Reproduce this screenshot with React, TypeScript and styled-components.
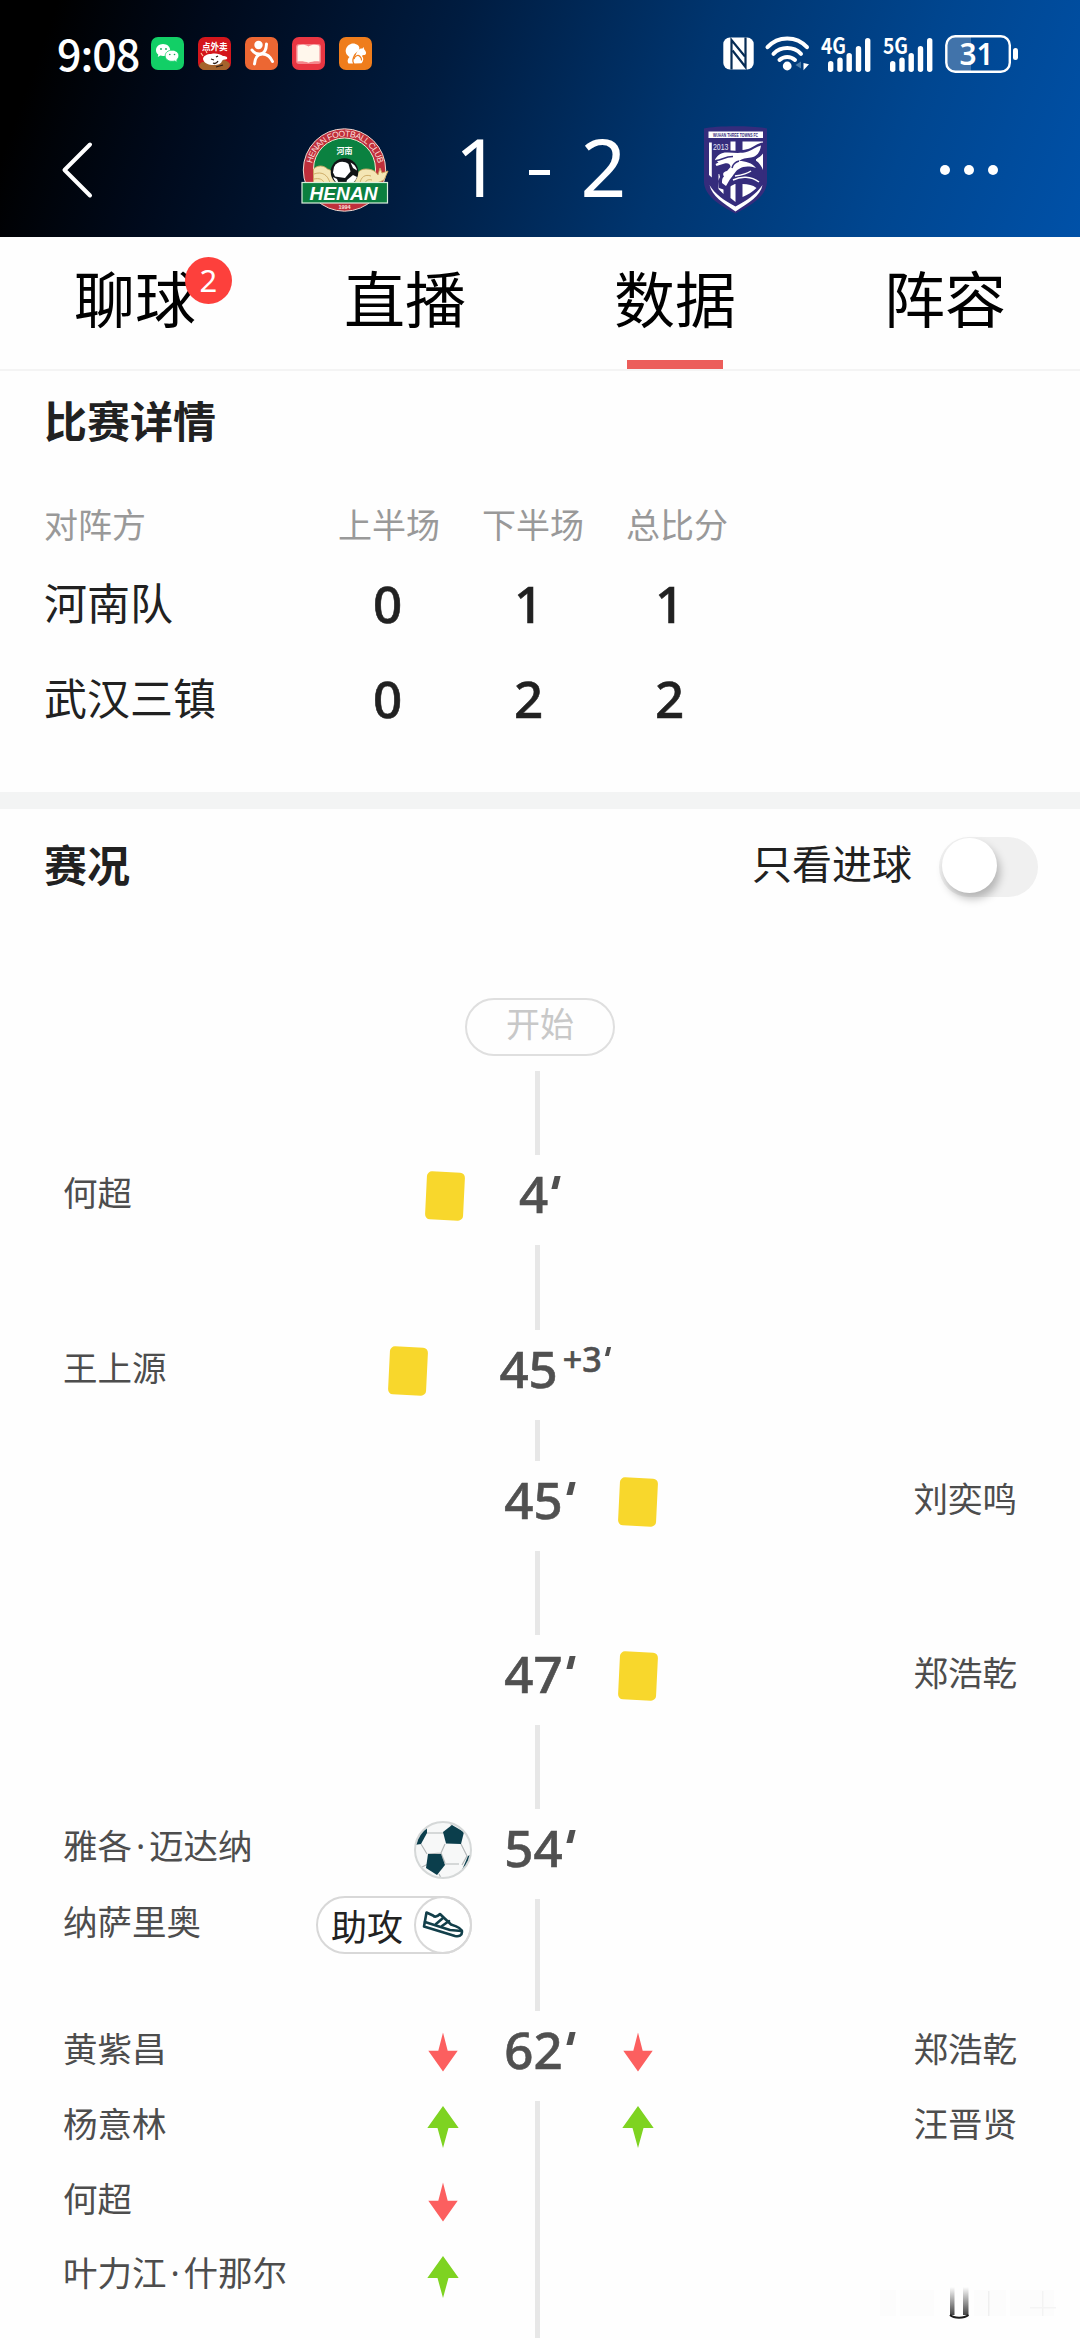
import { useState } from 'react';
import styled, { createGlobalStyle } from 'styled-components';

type IconKind = 'card' | 'goal' | 'assist' | 'off' | 'on';

interface Entry {
  name: string;
  icon: IconKind;
}

interface MatchEvent {
  minute: string;
  extra?: string;
  height: number;
  home: Entry[];
  away: Entry[];
}

const tabs = [
  { label: '聊球', badge: 2 },
  { label: '直播' },
  { label: '数据' },
  { label: '阵容' }
];

const scores = [
  { team: '河南队', values: [0, 1, 1] },
  { team: '武汉三镇', values: [0, 2, 2] }
];

const events: MatchEvent[] = [
  { minute: '4', height: 175, home: [{ name: '何超', icon: 'card' }], away: [] },
  { minute: '45', extra: '+3', height: 131, home: [{ name: '王上源', icon: 'card' }], away: [] },
  { minute: '45', height: 174, home: [], away: [{ name: '刘奕鸣', icon: 'card' }] },
  { minute: '47', height: 174, home: [], away: [{ name: '郑浩乾', icon: 'card' }] },
  {
    minute: '54',
    height: 202,
    home: [
      { name: '雅各·迈达纳', icon: 'goal' },
      { name: '纳萨里奥', icon: 'assist' }
    ],
    away: []
  },
  {
    minute: '62',
    height: 327,
    home: [
      { name: '黄紫昌', icon: 'off' },
      { name: '杨意林', icon: 'on' },
      { name: '何超', icon: 'off' },
      { name: '叶力江·什那尔', icon: 'on' }
    ],
    away: [
      { name: '郑浩乾', icon: 'off' },
      { name: '汪晋贤', icon: 'on' }
    ]
  }
];

/* ---------- status bar icons ---------- */

const WechatIcon = () => (
  <svg width="33" height="33" viewBox="0 0 33 33">
    <rect width="33" height="33" rx="7" fill="#12cf66" />
    <path d="M12 7c4.200 0 7.200 2.800 7.200 6.200S16.200 19 12 19c-.9 0-1.800-.1-2.600-.4L6.800 20l.5-2.500C5.800 16.400 5 15 5 13.200 5 9.800 8 7 12 7z" fill="#fff" />
    <path d="M21 13.200c3.900 0 6.800 2.400 6.800 5.500 0 1.700-.8 3-2 4l.4 2.500-2.500-1.300c-.8.2-1.700.4-2.700.4-3.900 0-6.800-2.500-6.800-5.600s2.900-5.500 6.800-5.500z" fill="#fff" stroke="#12cf66" strokeWidth=".8" />
    <g fill="#12a957">
      <circle cx="10" cy="12" r=".9" />
      <circle cx="15" cy="12" r=".9" />
      <circle cx="18.800" cy="17.500" r=".8" />
      <circle cx="23.500" cy="17.500" r=".8" />
    </g>
  </svg>
);

const TakeoutIcon = () => (
  <svg width="33" height="33" viewBox="0 0 33 33">
    <rect width="33" height="33" rx="7" fill="#d4161c" />
    <path d="M1 29c1-4 4-5 8-4l17-2c4 1 6 3 6 5-1 3-3 5-6 5H7c-3 0-5-2-6-4z" fill="#a4632c" />
    <path d="M5 22c0-3 4-5 8-5 5-1 9 0 12 2 3 0 5 1 4 3-2 1-4 0-5 2-1 3-4 4-8 4-6 0-10-2-11-6z" fill="#fff" />
    <path d="M13 22l3 1M18 20l2-1M15 26c2 1 4 0 5-2M18 30l7-2" stroke="#2b1a12" strokeWidth="1.300" fill="none" />
    <path d="M3 16l2 3M8 14l1 2" stroke="#ffc9a0" strokeWidth="1.200" />
    <text x="16.800" y="12.600" textAnchor="middle" fontSize="8.600" fontWeight="700" fill="#fff" fontFamily="Noto Sans CJK SC, sans-serif">点外卖</text>
  </svg>
);

const RunnerIcon = () => (
  <svg width="33" height="33" viewBox="0 0 33 33">
    <rect width="33" height="33" rx="7" fill="#ec6733" />
    <circle cx="13.500" cy="8" r="4.200" fill="#fff" />
    <g fill="none" stroke="#fff" strokeWidth="3" strokeLinecap="round">
      <path d="M7 13c2 3 5 4.500 8.500 4 4-.6 5.800-4.500 6-10" />
      <path d="M9.500 27c.3-6 3.500-10 8-10s8 3 10 7.500" />
    </g>
  </svg>
);

const BookIcon = () => (
  <svg width="33" height="33" viewBox="0 0 33 33">
    <rect width="33" height="33" rx="7" fill="#e93642" />
    <rect x="4" y="7" width="25" height="20" rx="3" fill="#f5858b" />
    <path d="M6 8.500c3-1.200 8-1 10.500 1 2.500-2 7.500-2.200 10.500-1l.5 1.500v14.500c-3.500-.6-8 0-11 1.200-3-1.200-7.500-1.800-11-1.200V10z" fill="#fff7ec" />
  </svg>
);

const SquirrelIcon = () => (
  <svg width="33" height="33" viewBox="0 0 33 33">
    <rect width="33" height="33" rx="7" fill="#ef7d1c" />
    <path d="M14 26.500H9.500c-1.500-2-1-4.500 1-6.500-3-2-4.500-5-3.500-8 1.500-4 5.500-6.500 9.500-5 3.500 1 5 4 3 6.500-2 2-4 3-5 5.500-1 2.500-2 4.500-.5 7.500z" fill="#fff" />
    <path d="M17 17.500c1-4 3.500-6.500 6.500-6l1-1.500.8 2.500c2 2 2.200 4 1.200 5-1 1-3 0-3.500 1.500 2 2 1.500 5-.5 7.200l-7 .3c-2-2.500-.5-6 1.500-9z" fill="#fff" />
    <path d="M15 22c1-3.500 4-4.500 6-2.500s1.500 3 1.500 4" fill="none" stroke="#ef7d1c" strokeWidth="1.200" />
  </svg>
);

const NfcIcon = () => (
  <svg width="31" height="33" viewBox="0 0 31 33">
    <rect x=".3" y=".5" width="30.400" height="32" rx="6.500" fill="#fff" />
    <g fill="none" stroke="#062c55" strokeWidth="2.200">
      <path d="M8.500 32.500V3L22 19.500" />
      <path d="M22.500.5V30L9.500 13.500" />
    </g>
  </svg>
);

const WifiIcon = () => (
  <svg width="45" height="35" viewBox="0 0 45 35">
    <g fill="none" stroke="#fff" strokeWidth="4" strokeLinecap="round">
      <path d="M2.500 11.200C13-.5 31.500-.5 42 11.200" />
      <path d="M8.500 17.800c7.500-7.600 20-7.600 27.500 0" />
      <path d="M14.500 24c4.500-4 11-4 15.500 0" />
    </g>
    <circle cx="22.200" cy="30" r="4.400" fill="#fff" />
    <path d="M36 25.500v7l-5.500-3.500z" fill="#4b7ba8" />
    <path d="M38.500 27l5.500 1.200-5.500 6z" fill="#fff" />
  </svg>
);

const SignalIcon = ({ label }: { label: string }) => (
  <svg width="51" height="36" viewBox="0 0 51 36">
    <text x="0" y="18" textLength="25" lengthAdjust="spacingAndGlyphs" fontSize="22" fontWeight="600" fill="#fff" fontFamily="Noto Sans CJK SC, sans-serif">{label}</text>
    <g fill="#fff">
      <rect x="7" y="25" width="5.400" height="11" rx="2.700" />
      <rect x="16.300" y="21.500" width="5.400" height="14.500" rx="2.700" />
      <rect x="25.500" y="17" width="5.400" height="19" rx="2.700" />
      <rect x="34.800" y="10" width="5.400" height="26" rx="2.700" />
      <rect x="44" y="2" width="5.400" height="34" rx="2.700" />
    </g>
  </svg>
);

const BatteryIcon = () => (
  <svg width="74" height="38" viewBox="0 0 74 38">
    <path d="M9 1.500h17v35H9c-5 0-7.500-3-7.500-7.500V9C1.500 4.500 4 1.500 9 1.500z" fill="#4173aa" />
    <rect x="1.300" y="1.300" width="63.500" height="35.400" rx="9" fill="none" stroke="#fff" strokeWidth="2.400" />
    <rect x="68" y="13" width="5" height="12" rx="2.500" fill="#fff" />
    <text x="14.500" y="30.200" textLength="34" lengthAdjust="spacingAndGlyphs" fontSize="31" fontWeight="600" fill="#fff" fontFamily="Noto Sans, sans-serif">31</text>
  </svg>
);

/* ---------- club crests ---------- */

const HenanCrest = () => (
  <svg width="88" height="86" viewBox="0 0 88 86">
    <defs>
      <path id="henanArc" d="M10.500 43a33.500 33.500 0 0 1 67 0" />
    </defs>
    <circle cx="43.500" cy="43" r="41.200" fill="#bf2f3b" stroke="#f0d9d0" strokeWidth="1" />
    <circle cx="43.500" cy="42" r="31" fill="#0b8140" stroke="#f2ead2" strokeWidth="1" />
    <text fontSize="8.600" fill="#fbdcd8" fontFamily="Liberation Sans, sans-serif">
      <textPath href="#henanArc" startOffset="50%" textAnchor="middle" textLength="92">HENAN FOOTBALL CLUB</textPath>
    </text>
    <text x="43.500" y="27" textAnchor="middle" fontSize="8" fontWeight="700" fill="#fff" fontFamily="Noto Sans CJK SC, sans-serif">河南</text>
    <g fill="#f4e6b5" stroke="#c9a660" strokeWidth=".9">
      <path d="M12.500 56V42c4-4 10-4 14 0 4 1 7 5 7 9l2 5z" />
      <path d="M54 56c0-9 4-14 11-14s10 3 12 6l2-7 2 5 6-2-4 9-7 3z" />
      <path d="M13 47c8-3 14 1 16 9M13 52c5-1 9 0 10 4M59 56c1-6 5-9 11-7M64 56c1-3 4-4 7-3" fill="none" />
    </g>
    <circle cx="43.500" cy="45" r="13.800" fill="#101416" />
    <g fill="#fff">
      <path d="M33 40c3-6 10-6.500 14.500-3l2 7.500-5.500 6.500-10-1.500-2-4z" />
      <path d="M49.500 35.500c3.500 1.500 6 4.500 6.500 8l-4-2.500z" />
      <path d="M46 53l6-5 4 2c-1.500 4-4 6-7 7h-4z" />
      <path d="M32 50l4 2 2 5c-3-1-5-4-6-7z" />
    </g>
    <rect x="1" y="55.500" width="85.500" height="20.500" fill="#0b7f3f" stroke="#d9efdc" strokeWidth="1.200" />
    <text x="8.500" y="72.500" textLength="68" lengthAdjust="spacingAndGlyphs" fontSize="19" fontWeight="700" fontStyle="italic" fill="#fff" fontFamily="Liberation Sans, sans-serif">HENAN</text>
    <text x="43.500" y="82.300" textAnchor="middle" fontSize="5.500" fontWeight="700" fill="#fbe3df" fontFamily="Liberation Sans, sans-serif">1994</text>
  </svg>
);

const WuhanCrest = () => (
  <svg width="70" height="92" viewBox="0 0 70 92">
    <path d="M3 4.500C14 1.500 55 1.500 66 4.500v54C65 72 51 81 34.500 89.500 18 81 4 72 3 58.500z" fill="#352c7c" />
    <rect x="7.500" y="7.500" width="54.500" height="6.500" fill="#fff" />
    <text x="12" y="12.700" textLength="45" lengthAdjust="spacingAndGlyphs" fontSize="5" fontWeight="700" fill="#352c7c" fontFamily="Liberation Sans, sans-serif">WUHAN THREE TOWNS FC</text>
    <g fill="#fff">
      <path d="M8 18.500h2.800v35L8 51z" />
      <path d="M29.500 17.500h5V28h-5zM41.500 17.500H62V20c-6 1-9 4-14 5.500l-6.500.5z" />
      <path d="M55 35c3-1.500 5-3 7-5.500V47c-2-2-4-3-7-4z" />
      <path d="M17.500 50h5v20l-5-5zM29.500 60h5v18l-5-4zM41.500 60c6 0 10 1 14 4-4 4-9 7-14 9z" />
      <path d="M8.500 61c6 10 15 15.500 26 21.500 11-6 20-11.500 27-21.500-2 11-14 18-27 26.500C22 79 11 72 8.500 61z" />
    </g>
    {/* dark backing keeps the head clear of the stripes */}
    <path d="M12 40c0-8 5-14 13-14 9 1 16 1 22-1 6-2 9-6 15.500-6.500C61 27 59 33 54 36c5 3 8 8 9 14v8c-7-6-13-6-20-4-5 2-8 6-13 8l-6 4-6-2-1-7 2-4-2-8z" fill="#352c7c" />
    <path d="M14 35.500c3-5 7-7.500 13-7 8 .5 14 1 20-1 5-2 8-4.500 13-6-1 7-4 11-10 12-5 .5-9 1-12 3.500 7 0 13 2 17 7-7-2-12-2-17 1-4 2-5 6-8 9-2 2-3 5-5 8l-4-3c0-3 0-5 2-6.500-2-3 0-5 3-5.500l3.500-4c0-3-2.500-4.500-6-3.500L15.500 42l-1-2 3-1.500z" fill="#fff" />
    <g fill="none" stroke="#fff" strokeWidth="1.500">
      <path d="M34 52c7-1 12-2 16-5M32 56c8-4 18-4 26 2" />
    </g>
    <path d="M15 36.500c6 0 8-4 17-4M38 37c-4 1-6 3-7 7" stroke="#352c7c" strokeWidth="1.500" fill="none" />
    <text x="12" y="25.800" fontSize="9" textLength="15.500" lengthAdjust="spacingAndGlyphs" fill="#e6e3f5" fontFamily="Liberation Sans, sans-serif">2013</text>
  </svg>
);

/* ---------- timeline icons ---------- */

const YellowCard = () => (
  <svg width="42" height="52" viewBox="0 0 42 52">
    <rect x="2" y="2" width="38" height="48" rx="5" fill="#f8d72c" transform="rotate(2.800 21 26)" />
  </svg>
);

const Ball = () => (
  <svg width="58" height="58" viewBox="0 0 58 58">
    <defs>
      <clipPath id="ballClip">
        <circle cx="29" cy="29" r="27" />
      </clipPath>
    </defs>
    <circle cx="29" cy="29" r="28" fill="#f7f8f8" stroke="#d5d8d8" strokeWidth="2" />
    <g clipPath="url(#ballClip)">
      <g fill="none" stroke="#b3b7b8" strokeWidth="1.200">
        <path d="M12 12h18M7 23l6 10M31 23l-4 9-13 1M27 32l4 10M47 23l6 12-5 9M31 43h14M8 46l6-3M25 53l3 6M37 3l1 4M51 11l-3-2" />
      </g>
      <g fill="#0b3e4c">
        <path d="M38 4l12 7-3 12-15-.5L29 11z" />
        <path d="M14 33h13l4 11-8 10-11-7z" />
        <path d="M13 7v5L7 23l-6 1V10z" />
        <path d="M54 35l4-2v12l-10 4z" />
      </g>
    </g>
  </svg>
);

const Shoe = () => (
  <svg width="42" height="30" viewBox="0 0 42 30">
    <g fill="none" stroke="#123f4a" strokeWidth="2.600" strokeLinejoin="round" strokeLinecap="round">
      <path d="M4.500 2.500L2 16.500l31 9.500c4 1 7-.5 7-4 0-4-6-6-11-7.500L18 4c-2 2-5 3.500-7 1.500z" />
      <path d="M3 12l25 8 11.500 1" />
      <path d="M14 14l7-6M20 16l7-5" />
    </g>
  </svg>
);

const OffArrow = () => (
  <svg width="32" height="40" viewBox="0 0 32 40">
    <path d="M16 .5l4.700 18.200h10L16 39.500 1.300 18.700h10z" fill="#fc5f5f" />
  </svg>
);

const OnArrow = () => (
  <svg width="32" height="42" viewBox="0 0 32 42">
    <path d="M16 0l15.700 22H21.500L16 42l-5.500-20H.3z" fill="#7ed321" />
  </svg>
);

const EventIcon = ({ kind }: { kind: IconKind }) => {
  if (kind === 'card') return <YellowCard />;
  if (kind === 'goal') return <Ball />;
  if (kind === 'off') return <OffArrow />;
  if (kind === 'on') return <OnArrow />;
  return (
    <AssistPill>
      <span>助攻</span>
      <ShoeCircle>
        <Shoe />
      </ShoeCircle>
    </AssistPill>
  );
};

const Player = ({ name }: { name: string }) => {
  const [first, last] = name.split('·');

  return (
    <PlayerName>
      {first}
      {last && <NameDot>·</NameDot>}
      {last}
    </PlayerName>
  );
};

const App = () => {
  const [active, setActive] = useState('数据');
  const [goalsOnly, setGoalsOnly] = useState(false);

  const shown = goalsOnly
    ? events.filter(e => [...e.home, ...e.away].some(entry => entry.icon === 'goal'))
    : events;

  return (
    <Page>
      <GlobalStyle />
      <Header>
        <StatusBar>
          <Clock>9:08</Clock>
          <AppIcons>
            <WechatIcon />
            <TakeoutIcon />
            <RunnerIcon />
            <BookIcon />
            <SquirrelIcon />
          </AppIcons>
          <SystemIcons>
            <NfcIcon />
            <WifiIcon />
            <SignalIcon label="4G" />
            <SignalIcon label="5G" />
            <BatteryIcon />
          </SystemIcons>
        </StatusBar>
        <MatchBar>
          <BackButton aria-label="返回">
            <svg width="34" height="58" viewBox="0 0 34 58">
              <path d="M30 3.500L4.500 29 30 54.500" fill="none" stroke="#fff" strokeWidth="4" strokeLinecap="round" strokeLinejoin="round" />
            </svg>
          </BackButton>
          <Teams>
            <HenanCrest />
            <Score>
              <span>1</span>
              <Dash />
              <span>2</span>
            </Score>
            <CrestSlot>
              <WuhanCrest />
            </CrestSlot>
          </Teams>
          <MoreButton aria-label="更多">
            <i />
            <i />
            <i />
          </MoreButton>
        </MatchBar>
      </Header>

      <Tabs>
        {tabs.map(tab => (
          <Tab key={tab.label} $active={tab.label === active} onClick={() => setActive(tab.label)}>
            <TabLabel>
              {tab.label}
              {tab.badge && <Badge>{tab.badge}</Badge>}
            </TabLabel>
          </Tab>
        ))}
      </Tabs>

      <Details>
        <SectionTitle>比赛详情</SectionTitle>
        <HeadRow>
          <span>对阵方</span>
          <HeadCell>上半场</HeadCell>
          <HeadCell>下半场</HeadCell>
          <HeadCell>总比分</HeadCell>
        </HeadRow>
        {scores.map(row => (
          <ScoreRow key={row.team}>
            <TeamName>{row.team}</TeamName>
            {row.values.map((value, i) => (
              <ScoreCell key={i}>{value}</ScoreCell>
            ))}
          </ScoreRow>
        ))}
      </Details>

      <FeedHeader>
        <SectionTitle>赛况</SectionTitle>
        <FilterLabel>只看进球</FilterLabel>
        <Switch role="switch" aria-checked={goalsOnly} $on={goalsOnly} onClick={() => setGoalsOnly(!goalsOnly)}>
          <Knob />
        </Switch>
      </FeedHeader>

      <Timeline>
        <StartPill>开始</StartPill>
        <FirstLine />
        {shown.map((event, i) => (
          <EventRow key={i} $height={event.height}>
            <Side>
              {event.home.map(entry => (
                <HomeEntry key={entry.name}>
                  <Player name={entry.name} />
                  <IconSlot $kind={entry.icon} $inset={!!event.extra}>
                    <EventIcon kind={entry.icon} />
                  </IconSlot>
                </HomeEntry>
              ))}
            </Side>
            <Center>
              <Time $shifted={!!event.extra}>
                {event.minute}
                {event.extra ? <Extra>{event.extra}<Prime $small /></Extra> : <Prime />}
              </Time>
              <Line />
            </Center>
            <Side>
              {event.away.map(entry => (
                <AwayEntry key={entry.name}>
                  <IconSlot>
                    <EventIcon kind={entry.icon} />
                  </IconSlot>
                  <Player name={entry.name} />
                </AwayEntry>
              ))}
            </Side>
          </EventRow>
        ))}
      </Timeline>

      <Stamp>
        <svg width="180" height="34" viewBox="0 0 180 34">
          <defs>
            <linearGradient id="fade" x1="0" y1="0" x2="0" y2="1">
              <stop offset="0" stopColor="#222" stopOpacity="0" />
              <stop offset="1" stopColor="#222" stopOpacity=".85" />
            </linearGradient>
          </defs>
          <g fill="#fcfcfc">
            <rect x="0" y="3" width="16" height="26" />
            <rect x="20" y="3" width="34" height="26" />
            <rect x="94" y="3" width="32" height="26" />
            <rect x="130" y="3" width="44" height="26" />
          </g>
          <rect x="108" y="4" width="1.500" height="25" fill="#efefef" />
          <rect x="162" y="4" width="1.500" height="25" fill="#f3f3f3" />
          <rect x="150" y="20" width="26" height="1.500" fill="#f4f4f4" />
          <rect x="70" y="0" width="4.500" height="28" fill="url(#fade)" />
          <rect x="83" y="0" width="5.500" height="28" fill="url(#fade)" />
          <path d="M70 28c4 3.500 14 3.500 18.500 0" fill="none" stroke="#1b1b1b" strokeWidth="2" />
        </svg>
      </Stamp>
    </Page>
  );
};

const GlobalStyle = createGlobalStyle`
  * {
    box-sizing: border-box;
  }

  body {
    margin: 0;
    background: #fefefe;
  }

  svg {
    display: block;
    flex: none;
    overflow: visible;
  }

  button {
    border: 0;
    padding: 0;
    background: none;
    font: inherit;
    color: inherit;
  }
`;

const Page = styled.div`
  position: relative;
  width: 1080px;
  height: 2340px;
  overflow: hidden;
  background: #fefefe;
  color: #212121;
  font-family: 'Noto Sans CJK SC', sans-serif;
`;

const Header = styled.header`
  height: 237px;
  color: #fff;
  background: linear-gradient(110deg, #000 5%, #000a1c 19%, #001c40 40%, #00356f 62%, #004690 82%, #0051a8 100%);
`;

const StatusBar = styled.div`
  display: flex;
  align-items: center;
  height: 107px;
  padding: 0 61px 0 57px;
`;

const Clock = styled.div`
  width: 94px;
  padding-bottom: 4px;
  font-size: 43px;
  font-weight: 500;
  line-height: 48px;
  letter-spacing: -1px;
`;

const AppIcons = styled.div`
  display: flex;
  gap: 14px;
`;

const SystemIcons = styled.div`
  display: flex;
  align-items: center;
  gap: 11px;
  margin-left: auto;
`;

const MatchBar = styled.div`
  display: flex;
  align-items: center;
  height: 130px;
  padding: 0 82px 5px 60px;
`;

const BackButton = styled.button`
  width: 241px;
`;

const Teams = styled.div`
  display: flex;
  align-items: center;
`;

const CrestSlot = styled.div`
  display: flex;
  justify-content: center;
  width: 88px;
`;

const Score = styled.div`
  display: flex;
  align-items: center;
  justify-content: center;
  width: 303px;
  padding-bottom: 7px;
  font-family: 'Noto Sans', sans-serif;
  font-size: 80px;
  line-height: 90px;
  gap: 28px;

  span:last-child {
    margin-left: 3px;
  }
`;

const Dash = styled.i`
  width: 21px;
  height: 5px;
  margin-top: 13px;
  background: #fff;
`;

const MoreButton = styled.button`
  display: flex;
  gap: 14px;
  margin-left: auto;

  i {
    width: 10px;
    height: 10px;
    border-radius: 50%;
    background: #fff;
  }
`;

const Tabs = styled.nav`
  display: grid;
  grid-template-columns: repeat(4, 1fr);
  height: 134px;
  border-bottom: 2px solid #f4f4f4;
`;

const Tab = styled.button<{ $active: boolean }>`
  display: flex;
  flex-direction: column;
  align-items: center;
  padding-top: 19px;

  &::after {
    content: '';
    width: 96px;
    height: 9px;
    margin-top: auto;
    background: ${({ $active }) => ($active ? '#ec5d5a' : 'transparent')};
  }
`;

const TabLabel = styled.span`
  position: relative;
  font-size: 61px;
  line-height: 82px;
  color: #000;
`;

const Badge = styled.span`
  position: absolute;
  left: 111px;
  top: 1px;
  width: 47px;
  height: 47px;
  border-radius: 50%;
  background: #fd403c;
  color: #fff;
  font-family: 'Noto Sans', sans-serif;
  font-size: 31px;
  line-height: 46px;
  text-align: center;
`;

const SectionTitle = styled.h2`
  margin: 0;
  font-size: 43px;
  font-weight: 700;
  line-height: 60px;
  color: #212121;
`;

const Details = styled.section`
  height: 421px;
  padding: 18px 44px 0;
`;

const tableColumns = `
  display: grid;
  align-items: center;
`;

const HeadRow = styled.div`
  ${tableColumns}
  grid-template-columns: 273px repeat(3, 144px);
  height: 60px;
  margin-top: 45px;
  font-size: 34px;
  line-height: 50px;
  color: #999;
`;

const HeadCell = styled.span`
  text-align: center;
`;

const ScoreRow = styled.div`
  ${tableColumns}
  grid-template-columns: 273px repeat(3, 141px);
  height: 95px;
`;

const TeamName = styled.span`
  padding-bottom: 1px;
  font-size: 43px;
  line-height: 60px;
`;

const ScoreCell = styled.span`
  padding-top: 3px;
  font-family: 'Noto Sans', sans-serif;
  font-size: 51px;
  font-weight: 500;
  line-height: 60px;
  text-align: center;
  -webkit-text-stroke: 0.6px currentColor;
`;

const FeedHeader = styled.div`
  display: flex;
  align-items: flex-start;
  height: 128px;
  padding: 24px 42px 0 44px;
  border-top: 17px solid #f3f4f4;
`;

const FilterLabel = styled.span`
  margin-left: auto;
  margin-right: 27px;
  font-size: 40px;
  line-height: 59px;
`;

const Switch = styled.button<{ $on: boolean }>`
  display: flex;
  justify-content: ${({ $on }) => ($on ? 'flex-end' : 'flex-start')};
  width: 99px;
  height: 60px;
  margin-top: 4px;
  padding: 1px 3px;
  border-radius: 30px;
  background: ${({ $on }) => ($on ? '#ec5d5a' : '#f0f0f0')};
`;

const Knob = styled.span`
  width: 55px;
  height: 55px;
  border-radius: 50%;
  background: #fff;
  box-shadow: 3px 6px 9px rgba(0, 0, 0, 0.25);
`;

const Timeline = styled.section`
  display: flex;
  flex-direction: column;
  padding-top: 78px;
`;

const StartPill = styled.div`
  align-self: center;
  width: 150px;
  height: 58px;
  border: 2px solid #dfdfdf;
  border-radius: 29px;
  font-size: 34px;
  line-height: 46px;
  text-align: center;
  color: #c8c8c8;
`;

const FirstLine = styled.div`
  align-self: center;
  width: 5px;
  height: 84px;
  margin: 15px 5px 0 0;
  background: #e7e7e7;
`;

const EventRow = styled.div<{ $height: number }>`
  display: grid;
  grid-template-columns: 1fr 134px 1fr;
  height: ${({ $height }) => $height}px;
`;

const Side = styled.div`
  padding-top: 3px;
`;

const Entry = styled.div`
  display: flex;
  align-items: center;
  justify-content: space-between;
  height: 75px;
`;

const HomeEntry = styled(Entry)`
  padding-left: 63px;
`;

const AwayEntry = styled(Entry)`
  padding-right: 63px;
`;

const PlayerName = styled.span`
  padding-bottom: 10px;
  font-size: 34.500px;
  line-height: 50px;
  color: #4d4d4d;
`;

const NameDot = styled.span`
  display: inline-block;
  width: 17px;
  font-family: 'Noto Sans', sans-serif;
  text-align: center;
`;

const IconSlot = styled.span<{ $kind?: IconKind; $inset?: boolean }>`
  display: flex;
  justify-content: ${({ $kind }) => ($kind === 'assist' ? 'flex-end' : 'center')};
  width: ${({ $kind }) => ($kind === 'assist' ? '160px' : '61px')};
  margin-right: ${({ $inset }) => ($inset ? '37px' : '0')};
  padding-right: ${({ $kind }) => ($kind === 'assist' ? '1px' : '0')};
  padding-left: ${({ $kind }) => ($kind === 'card' ? '4px' : '0')};
`;

const Center = styled.div`
  display: flex;
  flex-direction: column;
  align-items: center;
`;

const Time = styled.div<{ $shifted: boolean }>`
  display: flex;
  align-items: flex-start;
  height: 90px;
  margin-left: ${({ $shifted }) => ($shifted ? '29px' : '-2px')};
  padding-top: 4px;
  font-family: 'Noto Sans', sans-serif;
  font-size: 51px;
  font-weight: 500;
  line-height: 68px;
  color: #505050;
  -webkit-text-stroke: 0.6px currentColor;
`;

const Extra = styled.span`
  display: flex;
  align-items: flex-start;
  margin: -5px 0 0 5px;
  font-size: 34px;
  line-height: 60px;
`;

const Prime = styled.i<{ $small?: boolean }>`
  width: ${({ $small }) => ($small ? 4 : 6)}px;
  height: ${({ $small }) => ($small ? 9 : 13)}px;
  margin: ${({ $small }) => ($small ? '18px 0 0 4px' : '17px 0 0 5px')};
  background: #505050;
  transform: skewX(-14deg);
`;

const Line = styled.div`
  flex: 1;
  width: 5px;
  margin-right: 5px;
  background: #e7e7e7;
`;

const AssistPill = styled.span`
  display: flex;
  flex: none;
  align-items: center;
  justify-content: space-between;
  width: 156px;
  height: 58px;
  padding-left: 13px;
  border: 2px solid #d8d8d8;
  border-radius: 29px;
  background: #fff;
  font-size: 36px;
  line-height: 50px;
  color: #222;
`;

const ShoeCircle = styled.span`
  display: flex;
  align-items: center;
  justify-content: center;
  width: 58px;
  height: 58px;
  margin: -2px;
  border: 2px solid #d8d8d8;
  border-radius: 50%;
`;

const Stamp = styled.div`
  position: absolute;
  left: 880px;
  top: 2287px;
`;

export default App;
